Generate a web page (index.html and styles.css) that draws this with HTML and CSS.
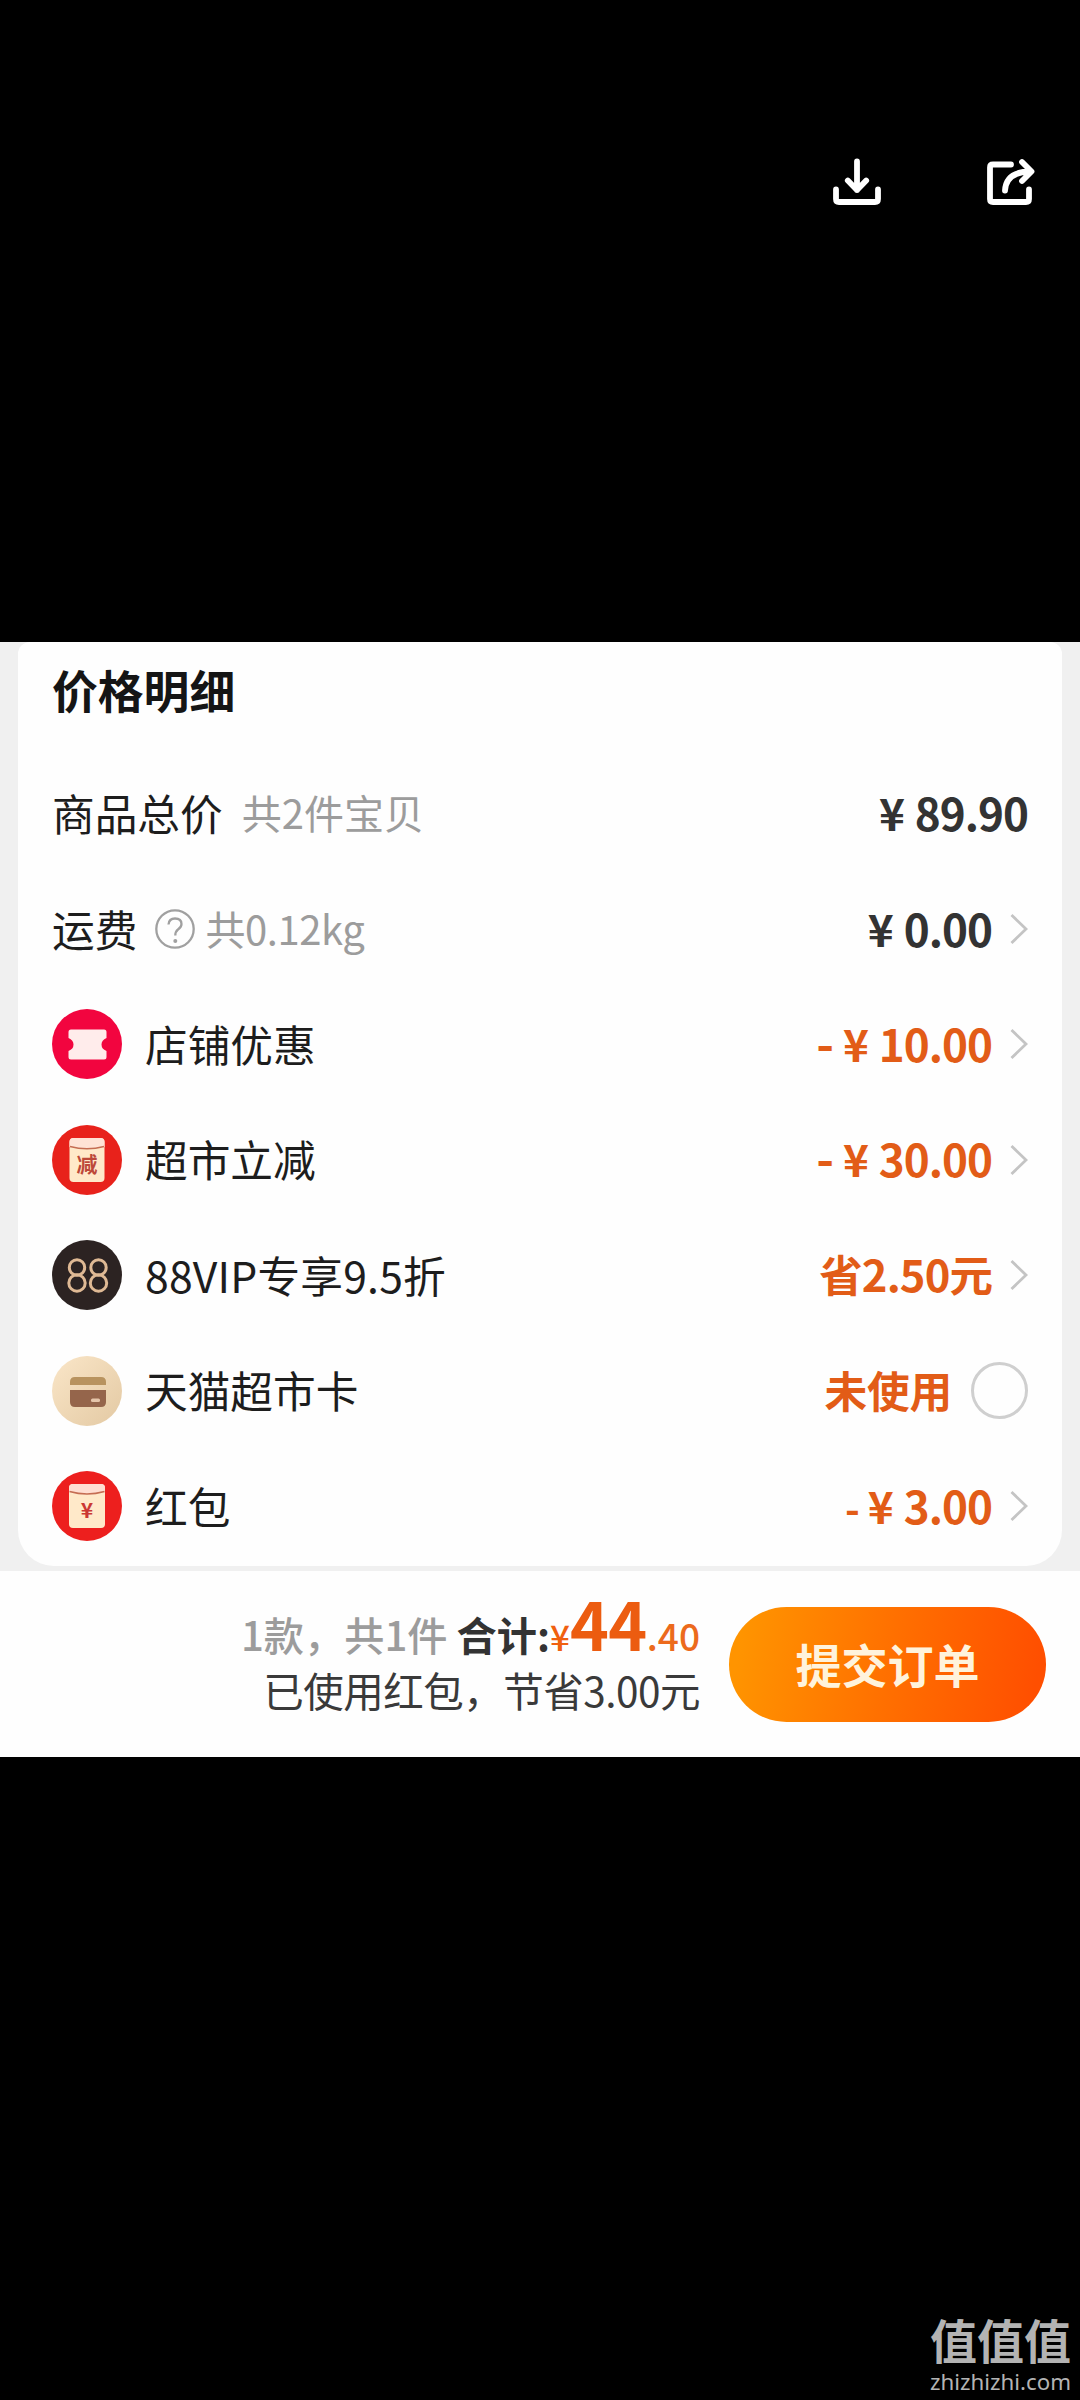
FILE: index.html
```html
<!DOCTYPE html>
<html lang="zh-CN">
<head>
<meta charset="utf-8">
<title>价格明细</title>
<link rel="stylesheet" href="styles.css">
</head>
<body>
<div class="viewer">
  <header class="toolbar">
    <svg class="tool" viewBox="0 0 56 56"><path d="M29 9.500V38M19.800 28.500L29 38L38.200 28.500M8 37.500V47Q8 50 11 50H47Q50 50 50 47V37.500"/></svg>
    <svg class="tool" viewBox="0 0 56 56"><path d="M29 12.500H11Q8 12.500 8 15.500V47Q8 50 11 50H44Q47 50 47 47V37.500M23 38.500Q24 19.500 49 19.500M40 10L49.500 19.500L40 29"/></svg>
  </header>

  <main class="sheet">
    <section class="card">
      <h1 class="title">价格明细</h1>
      <div class="row">
        <span class="label">商品总价</span><span class="note note-count">共2件宝贝</span>
        <span class="value"><i class="yen">¥</i>89.90</span>
      </div>
      <div class="row">
        <span class="label">运费</span>
        <svg class="help" viewBox="0 0 42 42"><circle cx="21" cy="21" r="18.700"/><path d="M14.500 16.500Q15 10.500 21 10.500Q27.500 10.500 27.500 16Q27.500 19 24 21.500Q21.300 23.500 21.300 27.500"/><circle class="dot" cx="21.300" cy="33" r="2"/></svg>
        <span class="note note-weight">共0.12kg</span>
        <span class="value"><i class="yen">¥</i>0.00</span>
        <svg class="chevron" viewBox="0 0 18 32"><path d="M1.500 2L16 16L1.500 30"/></svg>
      </div>
      <div class="row">
        <svg class="badge" viewBox="0 0 70 70"><circle cx="35" cy="35" r="35" fill="#f2053f"/><path d="M19 20.500H52Q54.500 20.500 54.500 23V29Q49.500 31 49.500 35.500Q49.500 40 54.500 42V48Q54.500 50.500 52 50.500H19Q16.500 50.500 16.500 48V42Q21.500 40 21.500 35.500Q21.500 31 16.500 29V23Q16.500 20.500 19 20.500Z" fill="#ffeceb"/></svg>
        <span class="label">店铺优惠</span>
        <span class="value off"><i class="minus">-</i><i class="yen">¥</i>10.00</span>
        <svg class="chevron" viewBox="0 0 18 32"><path d="M1.500 2L16 16L1.500 30"/></svg>
      </div>
      <div class="row">
        <svg class="badge" viewBox="0 0 70 70"><circle cx="35" cy="35" r="35" fill="#e8221b"/><rect x="17.500" y="13" width="35" height="44" rx="4" fill="#ffe9c9"/><path d="M17.500 22V17Q17.500 13 21.500 13H48.500Q52.500 13 52.500 17V22Q35 26 17.500 22Z" fill="#ffe3d5"/><path d="M18 21.500Q35 26 52 21.500" fill="none" stroke="#c56d52" stroke-width="1.500"/><text x="35" y="46.500" text-anchor="middle" font-size="21" font-weight="700" fill="#bd4939">减</text></svg>
        <span class="label">超市立减</span>
        <span class="value off"><i class="minus">-</i><i class="yen">¥</i>30.00</span>
        <svg class="chevron" viewBox="0 0 18 32"><path d="M1.500 2L16 16L1.500 30"/></svg>
      </div>
      <div class="row">
        <svg class="badge" viewBox="0 0 70 70"><circle cx="35" cy="35" r="35" fill="#2c2322"/><g fill="none" stroke="#dfb994" stroke-width="3"><circle cx="25" cy="27.500" r="7.700"/><circle cx="25" cy="43" r="8.200"/><circle cx="46.500" cy="27.500" r="7.700"/><circle cx="46.500" cy="43" r="8.200"/></g></svg>
        <span class="label vip">88VIP专享9.5折</span>
        <span class="value off saved">省2.50元</span>
        <svg class="chevron" viewBox="0 0 18 32"><path d="M1.500 2L16 16L1.500 30"/></svg>
      </div>
      <div class="row">
        <svg class="badge" viewBox="0 0 70 70"><defs><linearGradient id="gold" x1="0" y1="0" x2="1" y2="1"><stop offset="0" stop-color="#fae6c8"/><stop offset="1" stop-color="#e3c9a3"/></linearGradient></defs><circle cx="35" cy="35" r="35" fill="url(#gold)"/><path d="M18 29V26Q18 21 23 21H49Q54 21 54 26V29Z" fill="#b8935f"/><path d="M18 34H54V46Q54 51 49 51H23Q18 51 18 46Z" fill="#95654b"/><rect x="39" y="42.500" width="9" height="3.500" rx="1.500" fill="#e5c5aa"/></svg>
        <span class="label">天猫超市卡</span>
        <span class="value off unused">未使用</span>
        <span class="radio"></span>
      </div>
      <div class="row">
        <svg class="badge" viewBox="0 0 70 70"><circle cx="35" cy="35" r="35" fill="#ed1f1e"/><rect x="17" y="13" width="36" height="44" rx="4" fill="#ffe9c9"/><path d="M17 21V17Q17 13 21 13H49Q53 13 53 17V21Q35 26 17 21Z" fill="#ffded2"/><path d="M17.500 20.500Q35 25.500 52.500 20.500" fill="none" stroke="#c56d52" stroke-width="1.500"/><text x="35" y="47" text-anchor="middle" font-size="21" font-weight="700" fill="#cb3833">¥</text></svg>
        <span class="label">红包</span>
        <span class="value off"><i class="minus thin">-</i><i class="yen">¥</i>3.00</span>
        <svg class="chevron" viewBox="0 0 18 32"><path d="M1.500 2L16 16L1.500 30"/></svg>
      </div>
    </section>
    <footer class="checkout">
      <div class="summary">
        <div class="total"><span class="count">1款，共1件</span><span class="sum">合计:</span><span class="sign">¥</span><span class="big">44</span><span class="cents">.40</span></div>
        <div class="hint">已使用红包，节省3.00元</div>
      </div>
      <button class="submit">提交订单</button>
    </footer>
  </main>

  <aside class="watermark">
    <span class="mark">值值值</span>
    <span class="site">zhizhizhi.com</span>
  </aside>
</div>
</body>
</html>
```
FILE: styles.css
```css
* { box-sizing: border-box; }
body {
  margin: 0;
  background: #000;
  font-family: "Noto Sans CJK SC", sans-serif;
}
i { font-style: normal; }
.viewer {
  width: 1080px;
  height: 2400px;
  display: flex;
  flex-direction: column;
}
.toolbar {
  height: 642px;
  padding: 152px 42px 0 0;
  display: flex;
  justify-content: flex-end;
  gap: 98px;
}
.tool {
  width: 56px;
  height: 56px;
  fill: none;
  stroke: #fff;
  stroke-width: 5.8;
  stroke-linecap: round;
  stroke-linejoin: round;
}
.sheet {
  height: 1115px;
  background: #f0f0f0;
  display: flex;
  flex-direction: column;
}
.card {
  height: 924px;
  margin: 0 18px 5px;
  padding: 0 34px;
  background: #fefefe;
  border-radius: 12px 12px 36px 36px;
}
.title {
  margin: 0;
  height: 114px;
  line-height: 95px;
  font-size: 45.8px;
  font-weight: 700;
  color: #151515;
}
.row {
  height: 115.4px;
  display: flex;
  align-items: center;
}
.label, .note, .value {
  line-height: 60px;
  padding-bottom: 3px;
  white-space: nowrap;
}
.label {
  font-size: 42.7px;
  color: #1d1d1d;
}
.vip { letter-spacing: 0.2px; }
.note {
  font-size: 40px;
  color: #9c9c9c;
}
.note-count { margin-left: 19px; }
.note-weight { letter-spacing: -0.4px; }
.help {
  width: 42px;
  height: 42px;
  margin: 0 9px 0 17px;
  fill: none;
  stroke: #a0a0a0;
  stroke-width: 2.3;
}
.help .dot { fill: #a0a0a0; stroke: none; }
.badge { width: 70px; height: 70px; margin-right: 23px; }
.value {
  margin-left: auto;
  font-size: 44px;
  font-weight: 700;
  letter-spacing: -1px;
  color: #333;
}
.value.off { color: #e25c17; }
.yen { margin-right: 11px; }
.minus { margin-right: 10px; font-size: 48px; line-height: 1px; }
.minus.thin { margin-right: 9px; font-size: 40px; }
.chevron {
  width: 18px;
  height: 32px;
  margin-left: 18px;
  fill: none;
  stroke: #c4c4c4;
  stroke-width: 2.8;
}
.value.saved { font-size: 43.5px; letter-spacing: -0.9px; }
.value.unused { font-size: 42.7px; letter-spacing: -0.2px; }
.radio {
  width: 57px;
  height: 57px;
  margin-left: 19px;
  border: 3px solid #cfcfcf;
  border-radius: 50%;
}
.checkout {
  height: 186px;
  padding: 0 34px 0 0;
  background: #fefefe;
  display: flex;
  justify-content: flex-end;
  align-items: flex-start;
  gap: 29px;
}
.summary {
  padding-top: 24px;
  text-align: right;
  white-space: nowrap;
}
.total {
  height: 67px;
  line-height: 55px;
  display: flex;
  justify-content: flex-end;
  align-items: baseline;
}
.count { font-size: 40.2px; font-weight: 500; color: #9c9c9c; }
.sum { margin-left: 9px; font-size: 40.2px; font-weight: 700; color: #333; }
.sign { font-size: 35px; font-weight: 500; color: #f0600f; }
.big { font-size: 66px; font-weight: 700; color: #ec5c10; letter-spacing: -0.5px; }
.cents { font-size: 37px; font-weight: 500; color: #ec6a1c; }
.hint {
  height: 55px;
  line-height: 55px;
  font-size: 40.5px;
  letter-spacing: -0.5px;
  color: #3a3a3a;
}
.submit {
  width: 317px;
  height: 115px;
  margin-top: 36px;
  padding: 0 0 4px;
  border: 0;
  border-radius: 58px;
  background: linear-gradient(100deg, #ff9400 5%, #ff7000 50%, #ff4f00 95%);
  color: #fff3dc;
  font: 700 46px "Noto Sans CJK SC", sans-serif;
}
.watermark {
  margin-top: auto;
  padding: 0 9px 4px 0;
  display: flex;
  flex-direction: column;
  align-items: flex-end;
  color: #b3b3b3;
}
.mark { font-size: 47px; line-height: 57px; font-weight: 700; }
.site { font: 22.3px/29px "Noto Sans", sans-serif; }
```
